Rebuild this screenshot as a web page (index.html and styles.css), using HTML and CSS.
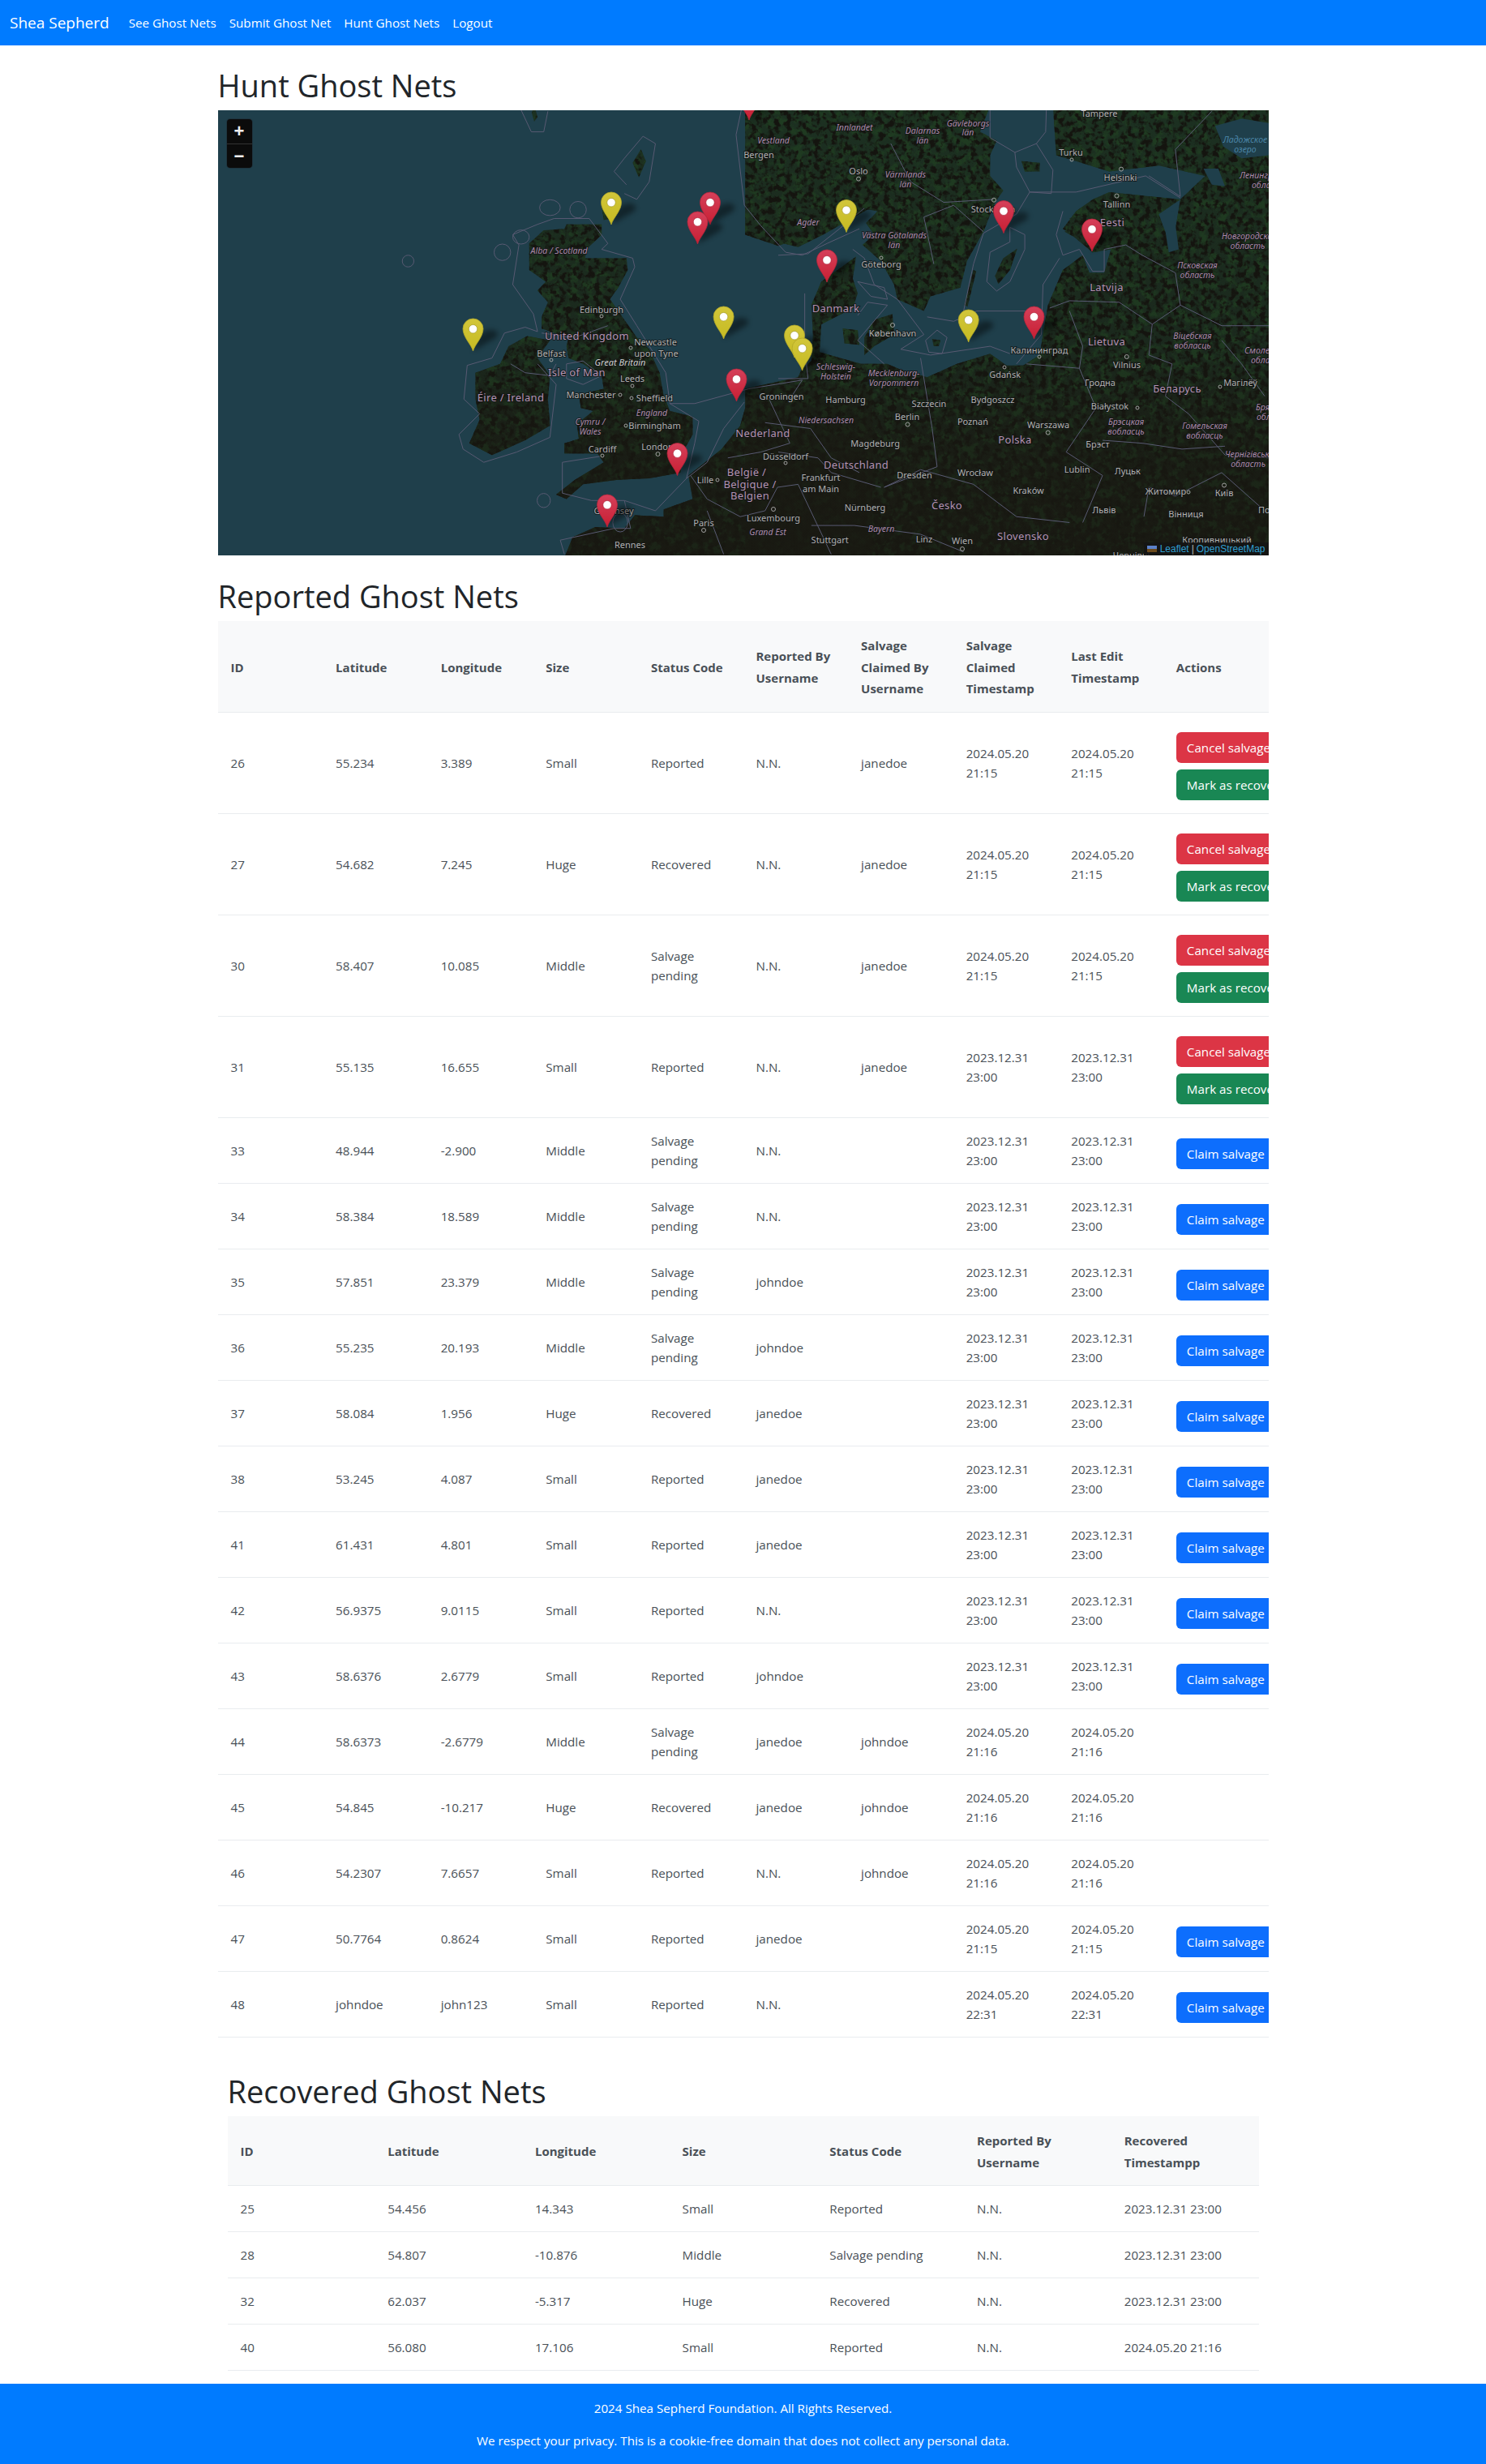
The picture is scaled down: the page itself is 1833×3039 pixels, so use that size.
FILE: index.html
```html
<!DOCTYPE html>
<html lang="en">
<head>
<meta charset="utf-8">
<title>Hunt Ghost Nets</title>
<link rel="stylesheet" href="styles.css">
</head>
<body>
<nav class="navbar">
  <a class="brand" href="#">Shea Sepherd</a>
  <ul class="nav-links">
    <li><a href="#">See Ghost Nets</a></li>
    <li><a href="#">Submit Ghost Net</a></li>
    <li><a href="#">Hunt Ghost Nets</a></li>
    <li><a href="#">Logout</a></li>
  </ul>
</nav>
<main class="container">
  <h1 class="title">Hunt Ghost Nets</h1>
  <div class="map">
    <svg class="map-svg" viewBox="0 0 1296 549" xmlns="http://www.w3.org/2000/svg">
      <defs>
        <linearGradient id="landfill" gradientUnits="userSpaceOnUse" x1="0" y1="17" x2="0" y2="1528">
          <stop offset="0" stop-color="#1c3021"/>
          <stop offset=".55" stop-color="#1b2a1e"/>
          <stop offset="1" stop-color="#191a13"/>
        </linearGradient>
        <linearGradient id="southfade" gradientUnits="userSpaceOnUse" x1="0" y1="17" x2="0" y2="1528">
          <stop offset="0" stop-color="#191912" stop-opacity="0"/>
          <stop offset=".55" stop-color="#191912" stop-opacity=".1"/>
          <stop offset=".8" stop-color="#191912" stop-opacity=".6"/>
          <stop offset="1" stop-color="#191912" stop-opacity=".7"/>
        </linearGradient>
        <filter id="mottle" x="0" y="0" width="100%" height="100%" color-interpolation-filters="sRGB">
          <feTurbulence type="fractalNoise" baseFrequency=".09" numOctaves="4" seed="7" result="n"/>
          <feColorMatrix in="n" type="matrix" values="0 0 0 0 .12  0 0 0 0 .23  0 0 0 0 .13  0 0 5 0 -2.25" result="g"/>
          <feTurbulence type="fractalNoise" baseFrequency=".14" numOctaves="3" seed="21" result="m"/>
          <feColorMatrix in="m" type="matrix" values="0 0 0 0 .08  0 0 0 0 .08  0 0 0 0 .06  0 0 5 0 -2.3" result="d"/>
          <feMerge result="tex"><feMergeNode in="g"/><feMergeNode in="d"/></feMerge>
          <feComposite in="tex" in2="SourceAlpha" operator="in" result="clipped"/>
          <feMerge><feMergeNode in="SourceGraphic"/><feMergeNode in="clipped"/></feMerge>
        </filter>
        <filter id="pinblur" x="-50%" y="-50%" width="200%" height="200%"><feGaussianBlur stdDeviation="3"/></filter>
        <linearGradient id="redg" x1="0" y1="0" x2="0" y2="1"><stop offset="0" stop-color="#d5405a"/><stop offset="1" stop-color="#c81f33"/></linearGradient>
        <linearGradient id="yelg" x1="0" y1="0" x2="0" y2="1"><stop offset="0" stop-color="#d2c63a"/><stop offset="1" stop-color="#c6bb22"/></linearGradient>
        <g id="pin-shadow"><path d="M0 0 L24 -14 C34 -19 32 -27 20 -26 C12 -25 8 -20 5 -14Z" fill="#000" opacity=".42" filter="url(#pinblur)"/></g>
        <g id="pin-red">
          <use href="#pin-shadow"/>
          <path d="M0 0C-2-8-12.5-17-12.5-27.5A12.5 12.5 0 1 1 12.5-27.5C12.5-17 2-8 0 0Z" fill="url(#redg)" stroke="#b5243a" stroke-width=".8"/>
          <circle cy="-27.3" r="5.2" fill="#fff" stroke="#a82035" stroke-width=".6"/>
        </g>
        <g id="pin-yellow">
          <use href="#pin-shadow"/>
          <path d="M0 0C-2-8-12.5-17-12.5-27.5A12.5 12.5 0 1 1 12.5-27.5C12.5-17 2-8 0 0Z" fill="url(#yelg)" stroke="#b3a728" stroke-width=".8"/>
          <circle cy="-27.3" r="5.2" fill="#fff" stroke="#98901c" stroke-width=".6"/>
        </g>
        <g id="land-left">
          <polygon points="770,470 805,425 855,420 860,405 945,405 945,440 908,490 905,520 1005,520 1008,560 985,620 965,660 985,700 1000,730 1030,790 1060,830 1085,910 1095,990 1110,1040 1165,1060 1165,1120 1145,1170 1135,1250 1060,1270 980,1275 900,1290 860,1340 835,1325 880,1275 950,1215 935,1185 855,1185 855,1150 890,1135 885,1085 925,1040 895,1030 890,985 950,965 945,920 900,880 865,860 860,820 865,790 800,760 800,720 815,670 790,630 810,600 770,560 770,510"/>
          <polygon points="765,785 820,800 790,860 820,920 815,1000 820,1090 760,1140 680,1190 625,1150 650,1070 640,1000 640,910 700,880 720,820"/>
          <polygon points="1040,150 1052,190 1035,245 1020,195"/>
          <polygon points="945,340 975,345 975,385 950,390"/>
          <polygon points="1305,0 1300,60 1290,170 1310,300 1345,390 1385,470 1420,482 1480,440 1530,400 1600,345 1600,0"/>
          <polygon points="1600,960 1460,945 1420,950 1340,965 1300,990 1280,1090 1235,1170 1195,1215 1155,1260 1165,1340 1095,1375 1095,1400 1025,1395 1000,1440 930,1435 875,1470 855,1540 1600,1540"/>
          <polygon points="782,0 790,40 782,55 776,25"/>
        </g>
        <g id="land-right">
          <polygon points="-100,0 -100,440 0,478 90,440 190,400 250,350 300,360 265,400 290,440 255,475 310,530 350,610 360,660 440,700 460,650 550,620 570,530 620,430 655,330 680,290 640,240 640,170 660,120 610,90 640,0"/>
          <polygon points="-100,965 60,925 70,900 100,870 105,780 100,680 130,600 235,515 225,590 240,640 225,690 130,745 125,840 250,880 330,880 370,900 450,925 540,880 640,845 690,885 740,885 790,850 800,780 815,680 860,560 920,510 940,570 985,570 1005,490 950,500 880,435 860,420 900,360 950,320 1000,295 1215,320 1150,370 1190,490 1215,320 1290,240 1150,205 1000,225 900,190 840,170 830,0 1500,0 1500,1540 -100,1540"/>
          <polygon points="195,760 240,765 245,815 200,810"/>
          <polygon points="290,730 345,710 350,780 290,820 260,850 260,790"/>
          <polygon points="465,795 490,800 485,820 470,820"/>
          <polygon points="562,680 590,560 598,565 572,685"/>
          <polygon points="655,580 680,520 722,488 700,560 665,608"/>
          <polygon points="865,430 905,410 935,425 890,445"/>
          <polygon points="880,385 915,365 925,385 895,400"/>
          <polygon points="735,190 790,195 790,225 745,225"/>
        </g>
      </defs>
      <rect class="sea" width="1296" height="549"/>

      <g class="land-base" filter="url(#mottle)">
        <use href="#land-left" transform="translate(-9,-6) scale(.5102 .3623)"/>
        <use href="#land-right" transform="translate(691,-6) scale(.4082 .3623)"/>
      </g>
      <g class="land-fade">
        <use href="#land-left" transform="translate(-9,-6) scale(.5102 .3623)"/>
        <use href="#land-right" transform="translate(691,-6) scale(.4082 .3623)"/>
      </g>

      <g transform="translate(691,-6) scale(.4082 .3623)">
        <polygon class="sea" points="1320,70 1400,45 1482,60 1482,170 1400,180 1345,140"/>
        <polygon class="sea" points="1150,370 1195,360 1210,490 1180,500 1170,430"/>
        <polygon class="sea" points="1285,215 1330,215 1350,275 1310,270"/>
      </g>

      <g class="bounds" transform="translate(-9,-6) scale(.5102 .3623)">
        <polyline points="790,405 730,440 745,475 730,610 780,710 790,770 760,755 710,775 680,860 620,885 612,1000 650,1050 600,1120 610,1170 660,1215 740,1180 820,1130 835,950 790,880"/>
        <polyline points="790,405 830,385 915,385 960,470 945,490 1020,520 1025,550 990,660 1030,750 1100,910 1110,1015 1180,1075 1170,1150 1150,1270 1075,1380 1000,1345 920,1345 850,1320 850,1215 940,1195"/>
        <polyline points="800,775 880,790 960,750"/>
        <polyline points="860,880 900,870 945,920 900,950 860,930 860,880"/>
        <polyline points="1000,300 1030,320 1060,260 1075,130 1045,105 1000,180 975,225 1005,270"/>
        <polyline points="1285,0 1270,100 1290,340 1330,410 1390,500 1430,510 1490,470 1568,420"/>
        <polyline points="1110,1015 1170,1015 1300,965 1430,935 1400,1000"/>
        <polyline points="1150,1270 1200,1215 1240,1100 1290,1010"/>
        <polyline points="745,0 775,90 805,90 815,20"/>
        <polyline points="1000,1345 1015,1440 975,1440 845,1480 855,1528"/>
        <polyline points="725,880 760,910 820,920 835,880"/>
        <polyline points="1160,1260 1200,1340 1280,1400 1340,1380 1370,1300 1420,1290 1500,1528"/>
        <polyline points="1350,1000 1400,1150 1330,1180 1250,1200"/>
        <polyline points="1340,1080 1450,1100 1500,1200 1568,1250"/>
        <polyline points="1200,1380 1240,1528"/>
        <ellipse cx="477" cy="530" rx="14" ry="20"/>
        <ellipse cx="705" cy="500" rx="20" ry="28"/>
        <ellipse cx="820" cy="348" rx="25" ry="27"/>
        <ellipse cx="888" cy="355" rx="20" ry="28"/>
        <ellipse cx="750" cy="448" rx="20" ry="24"/>
        <ellipse cx="805" cy="1345" rx="16" ry="24"/>
        <ellipse cx="990" cy="1420" rx="18" ry="32"/>
      </g>
      <g class="bounds" transform="translate(691,-6) scale(.4082 .3623)">
        <polyline points="640,17 640,110 715,160 780,130 808,90 810,17"/>
        <polyline points="715,160 720,210 760,295 900,295 1110,240 1215,315"/>
        <polyline points="780,130 830,220 825,300 760,295"/>
        <polyline points="760,295 720,370 620,435 590,540 560,700"/>
        <polyline points="700,415 745,440 745,490 700,600 660,632 630,600 640,500 700,465 700,415"/>
        <polyline points="850,520 800,610 795,780 720,880"/>
        <polyline points="860,360 840,440 860,510 910,490 950,565 985,565 985,490 1050,475 1100,510 1200,570 1215,680 1130,745 1030,670 880,665 820,690"/>
        <polyline points="1215,680 1340,750 1482,750"/>
        <polyline points="750,880 910,895 920,820 880,700"/>
        <polyline points="910,895 960,1030 870,1180 980,1260 920,1420"/>
        <polyline points="0,510 90,505 185,420 260,350"/>
        <polyline points="80,640 80,830 90,930 0,930"/>
        <polyline points="225,490 260,520 290,610 360,660 440,780 370,830"/>
        <polyline points="240,600 320,620 330,660 280,650 240,600"/>
        <polyline points="240,715 270,670 330,680 240,800 320,880"/>
        <polyline points="370,830 460,850 640,820 700,845"/>
        <polyline points="450,720 530,735 600,700 800,700"/>
        <polyline points="445,800 480,765 510,790 495,845 455,840 445,800"/>
        <polyline points="430,860 465,1100 480,1230 320,1300 430,1240 590,1290 720,1400 880,1420"/>
        <polyline points="1130,745 1120,850 1190,880 1170,990 1240,1050 1350,1190 1482,1200"/>
        <polyline points="980,1140 1100,1150 1220,1170 1350,1160"/>
        <polyline points="0,1180 120,1200 160,1250 310,1300"/>
        <polyline points="100,1430 230,1430 430,1460 560,1520"/>
        <polyline points="1120,240 1215,310 1200,150 1310,20"/>
        <polyline points="340,130 400,260 500,330 650,320"/>
        <polyline points="620,430 530,340 440,380 470,540"/>
        <polyline points="1340,800 1400,880 1470,990"/>
        <polyline points="1105,1400 1120,1300 1200,1330 1340,1250 1460,1370"/>
      </g>

      <g class="labels">
        <text class="st" x="420.6" y="177">Alba / Scotland</text>
        <text class="ct" x="667" y="59">Bergen</text>
        <text class="st" x="685" y="41">Vestland</text>
        <text class="st" x="728" y="142">Agder</text>
        <text class="ct" x="473" y="250">Edinburgh</text>
        <text class="co" x="455" y="283">United Kingdom</text>
        <text class="ct" x="411" y="304">Belfast</text>
        <text class="ct" x="539.5" y="290">Newcastle</text>
        <text class="ct" x="540.5" y="304">upon Tyne</text>
        <text class="gb" x="496" y="315">Great Britain</text>
        <text class="co" x="442.5" y="328">Isle of Man</text>
        <text class="ct" x="511" y="335">Leeds</text>
        <text class="co" x="361" y="359">Éire / Ireland</text>
        <text class="ct" x="460" y="355">Manchester</text>
        <text class="ct" x="538.5" y="359">Sheffield</text>
        <text class="st" x="535" y="377">England</text>
        <text class="ct" x="695" y="357">Groningen</text>
        <text class="st" x="459" y="388">Cymru /</text>
        <text class="st" x="459" y="400">Wales</text>
        <text class="ct" x="538.5" y="393">Birmingham</text>
        <text class="co" x="672" y="403">Nederland</text>
        <text class="ct" x="474" y="422">Cardiff</text>
        <text class="ct" x="542" y="419">London</text>
        <text class="ct" x="700" y="431">Düsseldorf</text>
        <text class="co" x="652" y="451">België /</text>
        <text class="co" x="656" y="466">Belgique /</text>
        <text class="co" x="656" y="480">Belgien</text>
        <text class="ct" x="601" y="460">Lille</text>
        <text class="ct" x="488" y="498">Guernsey</text>
        <text class="ct" x="599" y="513">Paris</text>
        <text class="ct" x="685" y="507">Luxembourg</text>
        <text class="st" x="678" y="524">Grand Est</text>
        <text class="ct" x="508" y="540">Rennes</text>
        <text class="ct" x="1087" y="8">Tampere</text>
        <text class="st" x="785" y="25">Innlandet</text>
        <text class="st" x="869" y="29">Dalarnas</text>
        <text class="st" x="869" y="41">län</text>
        <text class="st" x="925" y="20">Gävleborgs</text>
        <text class="st" x="925" y="31">län</text>
        <text class="ct" x="1052" y="56">Turku</text>
        <text class="lk" x="1267" y="40">Ладожское</text>
        <text class="lk" x="1267" y="52">озеро</text>
        <text class="ct" x="790" y="79">Oslo</text>
        <text class="st" x="848" y="83">Värmlands</text>
        <text class="st" x="848" y="95">län</text>
        <text class="ct" x="1113" y="87">Helsinki</text>
        <text class="st sl" x="1260" y="84">Ленинградская</text>
        <text class="st sl" x="1275" y="96">область</text>
        <text class="ct" x="956" y="126">Stockholm</text>
        <text class="ct" x="1108.5" y="120">Tallinn</text>
        <text class="co" x="1103" y="143">Eesti</text>
        <text class="st" x="834" y="158">Västra Götalands</text>
        <text class="st" x="834" y="170">län</text>
        <text class="st sl" x="1238" y="159">Новгородская</text>
        <text class="st" x="1270" y="171">область</text>
        <text class="ct" x="818" y="194">Göteborg</text>
        <text class="st" x="1208" y="195">Псковская</text>
        <text class="st" x="1208" y="207">область</text>
        <text class="co" x="1096" y="223">Latvija</text>
        <text class="co" x="762" y="249">Danmark</text>
        <text class="co" x="1096" y="290">Lietuva</text>
        <text class="ct" x="832" y="279">København</text>
        <text class="ct" x="1013" y="300">Калининград</text>
        <text class="st" x="1202" y="282">Віцебская</text>
        <text class="st" x="1202" y="294">вобласць</text>
        <text class="st sl" x="1266" y="300">Смоленская</text>
        <text class="st sl" x="1274" y="312">область</text>
        <text class="ct" x="1121" y="318">Vilnius</text>
        <text class="st" x="762" y="320">Schleswig-</text>
        <text class="st" x="762" y="332">Holstein</text>
        <text class="st" x="833.5" y="328">Mecklenburg-</text>
        <text class="st" x="833.5" y="340">Vorpommern</text>
        <text class="ct" x="970.6" y="330">Gdańsk</text>
        <text class="ct" x="1088" y="340">Гродна</text>
        <text class="ct" x="1261" y="340">Магілёў</text>
        <text class="co" x="1183" y="348">Беларусь</text>
        <text class="ct" x="774" y="361">Hamburg</text>
        <text class="ct" x="877" y="366">Szczecin</text>
        <text class="ct" x="955.5" y="361">Bydgoszcz</text>
        <text class="ct" x="1100" y="369">Białystok</text>
        <text class="st sl" x="1280" y="370">Брянская</text>
        <text class="st sl" x="1281" y="382">область</text>
        <text class="st" x="750" y="386">Niedersachsen</text>
        <text class="ct" x="850" y="382">Berlin</text>
        <text class="ct" x="931" y="388">Poznań</text>
        <text class="st" x="1120" y="388">Брэсцкая</text>
        <text class="st" x="1120" y="400">вобласць</text>
        <text class="ct" x="1024" y="392">Warszawa</text>
        <text class="st" x="1217" y="393">Гомельская</text>
        <text class="st" x="1217" y="405">вобласць</text>
        <text class="ct" x="810.6" y="415">Magdeburg</text>
        <text class="co" x="983" y="411">Polska</text>
        <text class="ct" x="1085" y="416">Брэст</text>
        <text class="co" x="787" y="442">Deutschland</text>
        <text class="st sl" x="1242" y="428">Чернігівська</text>
        <text class="st" x="1270.6" y="440">область</text>
        <text class="ct" x="859" y="454">Dresden</text>
        <text class="ct" x="934" y="451">Wrocław</text>
        <text class="ct" x="1059.6" y="447">Lublin</text>
        <text class="ct" x="1122" y="449">Луцьк</text>
        <text class="ct" x="743.6" y="457">Frankfurt</text>
        <text class="ct" x="743.6" y="471">am Main</text>
        <text class="ct" x="999.6" y="473">Kraków</text>
        <text class="ct" x="1169" y="474">Житомир</text>
        <text class="ct" x="1241" y="476">Київ</text>
        <text class="ct" x="798" y="494">Nürnberg</text>
        <text class="co" x="899" y="492">Česko</text>
        <text class="ct" x="1093" y="497">Львів</text>
        <text class="ct" x="1194" y="502">Вінниця</text>
        <text class="ct sl" x="1283" y="497">Полтава</text>
        <text class="st" x="818" y="520">Bayern</text>
        <text class="ct" x="754.7" y="534">Stuttgart</text>
        <text class="ct" x="871" y="533">Linz</text>
        <text class="ct" x="918" y="535">Wien</text>
        <text class="co" x="993" y="530">Slovensko</text>
        <text class="ct" x="1232" y="534">Кропивницький</text>
        <text class="ct" x="1126.5" y="553">Чернівці</text>
      </g>
      <g class="dots">
        <circle cx="542.5" cy="424" r="2.5"/><circle cx="599" cy="518" r="2.5"/><circle cx="790" cy="84.6" r="2.5"/>
        <circle cx="957" cy="110.7" r="2.5"/><circle cx="1114" cy="72.6" r="2.5"/><circle cx="1108.5" cy="105.6" r="2.5"/>
        <circle cx="832" cy="265" r="2.5"/><circle cx="850.6" cy="387.5" r="2.5"/><circle cx="1023.7" cy="397.6" r="2.5"/>
        <circle cx="1120.8" cy="304" r="2.5"/><circle cx="1241" cy="462.5" r="2.5"/><circle cx="685" cy="492" r="2.5"/>
        <circle cx="918" cy="541" r="2.5"/><circle cx="473" cy="254" r="2"/><circle cx="411" cy="308" r="2"/>
        <circle cx="509" cy="293" r="2"/><circle cx="511" cy="340" r="2"/><circle cx="496" cy="351" r="2"/>
        <circle cx="510" cy="355" r="2"/><circle cx="503" cy="389" r="2"/><circle cx="474" cy="426" r="2"/>
        <circle cx="616" cy="456" r="2"/><circle cx="700" cy="435" r="2"/><circle cx="818" cy="182" r="2"/>
        <circle cx="970" cy="317" r="2"/><circle cx="1013" cy="304" r="2"/><circle cx="1053" cy="61" r="2"/>
        <circle cx="1134" cy="367" r="2"/><circle cx="1236" cy="341" r="2"/><circle cx="1197" cy="471" r="2"/>
      </g>
      <use href="#pin-yellow" x="485" y="141"/>
      <use href="#pin-red" x="607" y="141"/>
      <use href="#pin-red" x="591.5" y="165"/>
      <use href="#pin-red" x="655" y="12"/>
      <use href="#pin-yellow" x="775" y="150.5"/>
      <use href="#pin-red" x="751" y="212"/>
      <use href="#pin-yellow" x="314.5" y="297"/>
      <use href="#pin-yellow" x="623.6" y="282"/>
      <use href="#pin-yellow" x="711" y="305"/>
      <use href="#pin-yellow" x="720.6" y="321"/>
      <use href="#pin-red" x="639.5" y="359"/>
      <use href="#pin-red" x="566.5" y="450.5"/>
      <use href="#pin-red" x="480" y="514"/>
      <use href="#pin-red" x="969" y="151.6"/>
      <use href="#pin-red" x="1078" y="174"/>
      <use href="#pin-red" x="1006.5" y="282"/>
      <use href="#pin-yellow" x="925.7" y="286"/>
    </svg>
    <div class="zoom-control">
      <a class="zoom-btn" href="#">+</a>
      <a class="zoom-btn" href="#">−</a>
    </div>
    <div class="attribution">
      <svg class="flag" viewBox="0 0 12 8" xmlns="http://www.w3.org/2000/svg"><rect width="12" height="4" fill="#5c81c9"/><rect y="4" width="12" height="4" fill="#6b4a1c"/></svg>
      <a href="#">Leaflet</a> | <a href="#">OpenStreetMap</a>
    </div>
  </div>

  <h2 class="title section-title">Reported Ghost Nets</h2>
  <table class="data-table">
    <thead>
      <tr><th>ID</th><th>Latitude</th><th>Longitude</th><th>Size</th><th>Status Code</th><th>Reported By Username</th><th>Salvage Claimed By Username</th><th>Salvage Claimed Timestamp</th><th>Last Edit Timestamp</th><th>Actions</th></tr>
    </thead>
    <tbody>
      <tr><td>26</td><td>55.234</td><td>3.389</td><td>Small</td><td>Reported</td><td>N.N.</td><td>janedoe</td><td>2024.05.20 21:15</td><td>2024.05.20 21:15</td><td class="actions"><button class="btn red">Cancel salvage</button><button class="btn green">Mark as recovered</button></td></tr>
      <tr><td>27</td><td>54.682</td><td>7.245</td><td>Huge</td><td>Recovered</td><td>N.N.</td><td>janedoe</td><td>2024.05.20 21:15</td><td>2024.05.20 21:15</td><td class="actions"><button class="btn red">Cancel salvage</button><button class="btn green">Mark as recovered</button></td></tr>
      <tr><td>30</td><td>58.407</td><td>10.085</td><td>Middle</td><td>Salvage pending</td><td>N.N.</td><td>janedoe</td><td>2024.05.20 21:15</td><td>2024.05.20 21:15</td><td class="actions"><button class="btn red">Cancel salvage</button><button class="btn green">Mark as recovered</button></td></tr>
      <tr><td>31</td><td>55.135</td><td>16.655</td><td>Small</td><td>Reported</td><td>N.N.</td><td>janedoe</td><td>2023.12.31 23:00</td><td>2023.12.31 23:00</td><td class="actions"><button class="btn red">Cancel salvage</button><button class="btn green">Mark as recovered</button></td></tr>
      <tr><td>33</td><td>48.944</td><td>-2.900</td><td>Middle</td><td>Salvage pending</td><td>N.N.</td><td></td><td>2023.12.31 23:00</td><td>2023.12.31 23:00</td><td class="actions"><button class="btn blue">Claim salvage</button></td></tr>
      <tr><td>34</td><td>58.384</td><td>18.589</td><td>Middle</td><td>Salvage pending</td><td>N.N.</td><td></td><td>2023.12.31 23:00</td><td>2023.12.31 23:00</td><td class="actions"><button class="btn blue">Claim salvage</button></td></tr>
      <tr><td>35</td><td>57.851</td><td>23.379</td><td>Middle</td><td>Salvage pending</td><td>johndoe</td><td></td><td>2023.12.31 23:00</td><td>2023.12.31 23:00</td><td class="actions"><button class="btn blue">Claim salvage</button></td></tr>
      <tr><td>36</td><td>55.235</td><td>20.193</td><td>Middle</td><td>Salvage pending</td><td>johndoe</td><td></td><td>2023.12.31 23:00</td><td>2023.12.31 23:00</td><td class="actions"><button class="btn blue">Claim salvage</button></td></tr>
      <tr><td>37</td><td>58.084</td><td>1.956</td><td>Huge</td><td>Recovered</td><td>janedoe</td><td></td><td>2023.12.31 23:00</td><td>2023.12.31 23:00</td><td class="actions"><button class="btn blue">Claim salvage</button></td></tr>
      <tr><td>38</td><td>53.245</td><td>4.087</td><td>Small</td><td>Reported</td><td>janedoe</td><td></td><td>2023.12.31 23:00</td><td>2023.12.31 23:00</td><td class="actions"><button class="btn blue">Claim salvage</button></td></tr>
      <tr><td>41</td><td>61.431</td><td>4.801</td><td>Small</td><td>Reported</td><td>janedoe</td><td></td><td>2023.12.31 23:00</td><td>2023.12.31 23:00</td><td class="actions"><button class="btn blue">Claim salvage</button></td></tr>
      <tr><td>42</td><td>56.9375</td><td>9.0115</td><td>Small</td><td>Reported</td><td>N.N.</td><td></td><td>2023.12.31 23:00</td><td>2023.12.31 23:00</td><td class="actions"><button class="btn blue">Claim salvage</button></td></tr>
      <tr><td>43</td><td>58.6376</td><td>2.6779</td><td>Small</td><td>Reported</td><td>johndoe</td><td></td><td>2023.12.31 23:00</td><td>2023.12.31 23:00</td><td class="actions"><button class="btn blue">Claim salvage</button></td></tr>
      <tr><td>44</td><td>58.6373</td><td>-2.6779</td><td>Middle</td><td>Salvage pending</td><td>janedoe</td><td>johndoe</td><td>2024.05.20 21:16</td><td>2024.05.20 21:16</td><td class="actions"></td></tr>
      <tr><td>45</td><td>54.845</td><td>-10.217</td><td>Huge</td><td>Recovered</td><td>janedoe</td><td>johndoe</td><td>2024.05.20 21:16</td><td>2024.05.20 21:16</td><td class="actions"></td></tr>
      <tr><td>46</td><td>54.2307</td><td>7.6657</td><td>Small</td><td>Reported</td><td>N.N.</td><td>johndoe</td><td>2024.05.20 21:16</td><td>2024.05.20 21:16</td><td class="actions"></td></tr>
      <tr><td>47</td><td>50.7764</td><td>0.8624</td><td>Small</td><td>Reported</td><td>janedoe</td><td></td><td>2024.05.20 21:15</td><td>2024.05.20 21:15</td><td class="actions"><button class="btn blue">Claim salvage</button></td></tr>
      <tr><td>48</td><td>johndoe</td><td>john123</td><td>Small</td><td>Reported</td><td>N.N.</td><td></td><td>2024.05.20 22:31</td><td>2024.05.20 22:31</td><td class="actions"><button class="btn blue">Claim salvage</button></td></tr>
    </tbody>
  </table>

  <section class="recovered">
    <h2 class="title">Recovered Ghost Nets</h2>
    <table class="data-table">
      <thead>
        <tr><th>ID</th><th>Latitude</th><th>Longitude</th><th>Size</th><th>Status Code</th><th>Reported By Username</th><th>Recovered Timestampp</th></tr>
      </thead>
      <tbody>
        <tr><td>25</td><td>54.456</td><td>14.343</td><td>Small</td><td>Reported</td><td>N.N.</td><td>2023.12.31 23:00</td></tr>
        <tr><td>28</td><td>54.807</td><td>-10.876</td><td>Middle</td><td>Salvage pending</td><td>N.N.</td><td>2023.12.31 23:00</td></tr>
        <tr><td>32</td><td>62.037</td><td>-5.317</td><td>Huge</td><td>Recovered</td><td>N.N.</td><td>2023.12.31 23:00</td></tr>
        <tr><td>40</td><td>56.080</td><td>17.106</td><td>Small</td><td>Reported</td><td>N.N.</td><td>2024.05.20 21:16</td></tr>
      </tbody>
    </table>
  </section>
</main>
<footer class="footer">
  <p>2024 Shea Sepherd Foundation. All Rights Reserved.</p>
  <p>We respect your privacy. This is a cookie-free domain that does not collect any personal data.</p>
</footer>
</body>
</html>
```

FILE: styles.css
```css
* { box-sizing: border-box; }
html, body { margin: 0; padding: 0; }
body {
  font-family: "Open Sans", "Noto Sans", sans-serif;
  font-size: 15.2px;
  line-height: 24px;
  color: #212529;
  background: #fff;
}
a { text-decoration: none; color: inherit; }

.navbar {
  display: flex;
  align-items: center;
  height: 56px;
  padding: 0 12px;
  background: #007bff;
  color: #fff;
}
.brand { font-size: 19px; margin-right: 24px; }
.nav-links { display: flex; gap: 16px; list-style: none; margin: 0; padding: 0; }

.container { width: 1320px; margin: 0 auto; padding: 24px 12px 0; }
.title {
  font-size: 38px;
  font-weight: 400;
  line-height: 48px;
  margin: 0 0 7px;
  padding-top: 1px;
  color: #212529;
}

.map { position: relative; height: 549px; overflow: hidden; background: #1f3f4b; }
.map-svg { display: block; width: 100%; height: 100%; }
.sea { fill: #1f3f4b; }
.land-base { fill: url(#landfill); }
.land-fade { fill: url(#southfade); }
.bounds polyline, .bounds ellipse {
  fill: none;
  stroke: #585a72;
  stroke-width: 1;
  vector-effect: non-scaling-stroke;
}
.labels text {
  font-family: "Noto Sans", sans-serif;
  text-anchor: middle;
  paint-order: stroke;
  stroke: rgba(20, 22, 22, .75);
  stroke-width: 2px;
}
.labels .ct { font-size: 11px; fill: #b0b0b0; }
.labels .st { font-size: 10.5px; font-style: italic; fill: #a98aa8; }
.labels .co { font-size: 13px; fill: #b393b2; letter-spacing: .3px; }
.labels .gb { font-size: 11px; font-style: italic; fill: #d0d0d0; }
.labels .lk { font-size: 10.5px; font-style: italic; fill: #4b86a8; stroke: none; }
.labels .sl { text-anchor: start; }
.dots circle { fill: none; stroke: #a0a0a0; stroke-width: 1; }

.zoom-control {
  position: absolute;
  top: 11px;
  left: 11px;
  display: flex;
  flex-direction: column;
  width: 31px;
  border-radius: 4px;
  overflow: hidden;
  background: #0b0b0b;
  box-shadow: 0 0 0 1px rgba(30, 50, 60, .8);
}
.zoom-btn {
  display: block;
  height: 30px;
  text-align: center;
  font: bold 22px/30px "Liberation Sans", sans-serif;
  color: #eee;
}
.zoom-btn + .zoom-btn { border-top: 1px solid #333; }

.attribution {
  position: absolute;
  right: 0;
  bottom: 0;
  display: flex;
  align-items: center;
  gap: 3px;
  height: 16px;
  padding: 0 4px;
  font: 12px/16px "Liberation Sans", sans-serif;
  color: #bbb;
  background: rgba(20, 20, 20, .85);
}
.attribution a { color: #2f9fd0; }
.flag { width: 12px; height: 8px; margin-right: 1px; }

.section-title { margin-top: 25px; }
.data-table {
  width: 100%;
  border-collapse: separate;
  border-spacing: 0;
  table-layout: fixed;
  color: #495057;
}
.data-table th, .data-table td {
  padding: 16px;
  text-align: left;
  vertical-align: middle;
  border-bottom: 1px solid #e9ecef;
}
.data-table th {
  background: #f8f9fa;
  font-weight: 700;
  line-height: 26.67px;
  font-size: 15px;
  padding-top: 17px;
  padding-bottom: 15px;
}
.actions { overflow: hidden; }
.btn {
  display: block;
  margin-top: 8px;
  height: 38px;
  padding: 0 12px;
  border: 1px solid transparent;
  border-radius: 6px;
  color: #fff;
  font: inherit;
  white-space: nowrap;
}
.red { background: #dc3545; }
.green { background: #198754; }
.blue { background: #0d6efd; }

.recovered { margin-top: 41px; padding: 0 12px; }

.footer {
  margin-top: 16px;
  height: 100px;
  padding-top: 18px;
  background: #007bff;
  color: #fff;
  text-align: center;
}
.footer p { margin: 0 0 16px; }
```
